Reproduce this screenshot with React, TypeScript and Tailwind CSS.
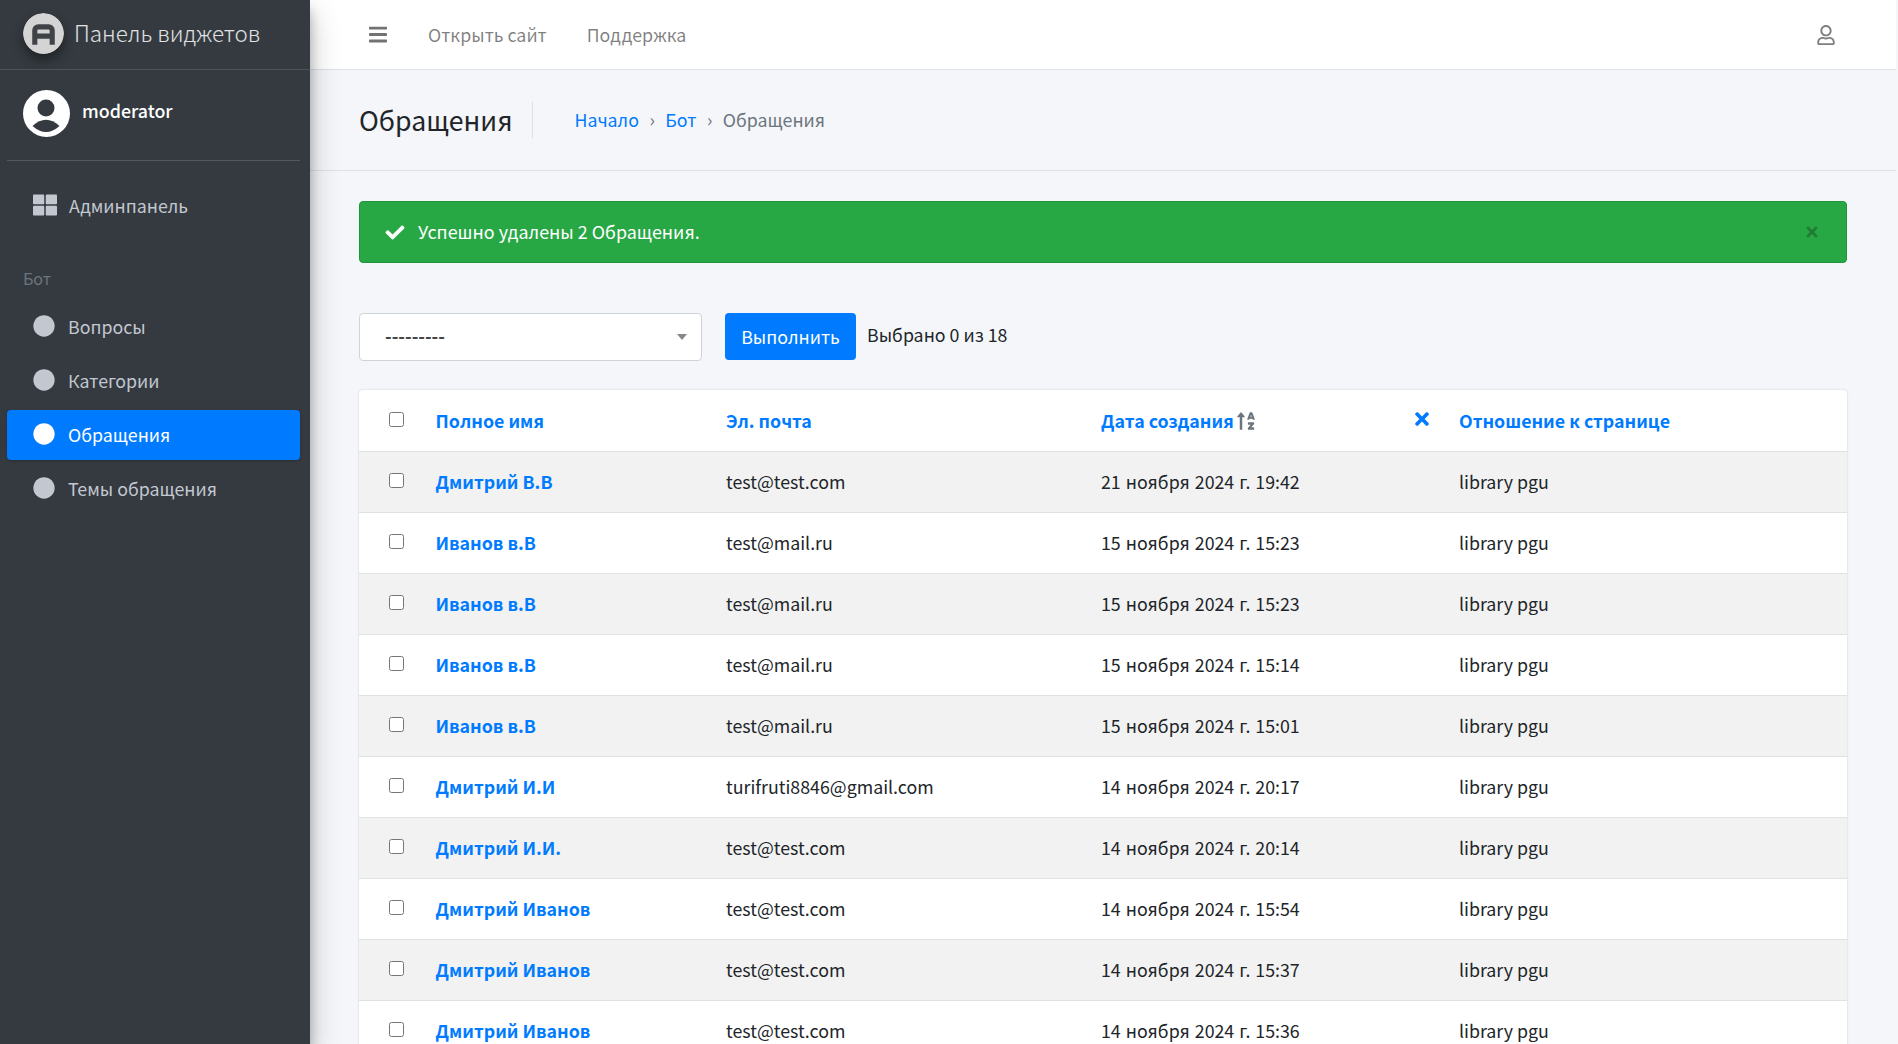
import { FaBars, FaCheck, FaCircle, FaRegUser, FaSortAlphaUp, FaThLarge, FaTimes } from "react-icons/fa";

const rows = [
  { name: "Дмитрий В.В", email: "test@test.com", date: "21 ноября 2024 г. 19:42" },
  { name: "Иванов в.В", email: "test@mail.ru", date: "15 ноября 2024 г. 15:23" },
  { name: "Иванов в.В", email: "test@mail.ru", date: "15 ноября 2024 г. 15:23" },
  { name: "Иванов в.В", email: "test@mail.ru", date: "15 ноября 2024 г. 15:14" },
  { name: "Иванов в.В", email: "test@mail.ru", date: "15 ноября 2024 г. 15:01" },
  { name: "Дмитрий И.И", email: "turifruti8846@gmail.com", date: "14 ноября 2024 г. 20:17" },
  { name: "Дмитрий И.И.", email: "test@test.com", date: "14 ноября 2024 г. 20:14" },
  { name: "Дмитрий Иванов", email: "test@test.com", date: "14 ноября 2024 г. 15:54" },
  { name: "Дмитрий Иванов", email: "test@test.com", date: "14 ноября 2024 г. 15:37" },
  { name: "Дмитрий Иванов", email: "test@test.com", date: "14 ноября 2024 г. 15:36" },
];

const botLinks = ["Вопросы", "Категории", "Обращения", "Темы обращения"];

function Logo() {
  return (
    <svg viewBox="0 0 40 40" className="h-[41px] w-[41px] shrink-0 rounded-full shadow-[0_6px_12px_rgba(0,0,0,0.4)]">
      <circle cx="20" cy="20" r="20" fill="#d4d4d4" />
      <path
        fillRule="evenodd"
        d="M9 31V17a6 6 0 0 1 6-6h10a6 6 0 0 1 6 6v14h-5v-6H14v6zM14 20h12v-3a1 1 0 0 0-1-1H15a1 1 0 0 0-1 1z"
        fill="#3f4348"
      />
    </svg>
  );
}

function Avatar() {
  return (
    <svg viewBox="0 0 47 47" className="h-[47px] w-[47px] shrink-0">
      <circle cx="23.5" cy="23.5" r="23.5" fill="#fff" />
      <circle cx="23" cy="18" r="8.5" fill="#343a40" />
      <path d="M9.5 36Q23 23.5 36.5 36Q23 48 9.5 36z" fill="#343a40" />
    </svg>
  );
}

function Sidebar() {
  return (
    <aside className="z-10 flex w-[310px] shrink-0 flex-col bg-[#343a40] shadow-[0_14px_28px_rgba(0,0,0,0.25),0_10px_10px_rgba(0,0,0,0.22)]">
      <div className="flex h-[70px] items-center gap-[10px] border-b border-[#4b545c] pb-[3px] pl-[23px]">
        <Logo />
        <span className="text-[22.4px] font-light text-white/85">Панель виджетов</span>
      </div>
      <div className="mr-[10px] ml-[7px]">
        <div className="flex h-[91px] items-start gap-[12px] border-b border-[#4f5962] pt-[20px] pl-[16px]">
          <Avatar />
          <span className="mt-[6px] text-[17.8px] leading-[28px] font-medium text-white">moderator</span>
        </div>
        <nav className="mt-[20px] flex flex-col">
          <a className="flex h-[50px] items-center gap-[12px] pb-[2px] pl-[26px] text-[17.8px] text-[#c2c7d0]">
            <FaThLarge className="h-[24px] w-[24px]" />
            <span>Админпанель</span>
          </a>
          <div className="mt-[33px] mb-[9px] pl-[16px] text-[16px] leading-[28px] text-[#6c757d]">Бот</div>
          <div className="flex flex-col gap-[4px]">
            {botLinks.map((link) => {
              const active = link === "Обращения";
              return (
                <a
                  key={link}
                  className={
                    active
                      ? "mt-[1px] -mb-[1px] flex h-[50px] items-center gap-[13px] rounded-[4px] bg-[#007bff] pb-[2px] pl-[26px] text-[17.8px] text-white shadow-[0_1px_3px_rgba(0,0,0,0.2)]"
                      : "flex h-[50px] items-center gap-[13px] pl-[26px] text-[17.8px] text-[#c2c7d0]"
                  }
                >
                  <FaCircle className="h-[22px] w-[22px]" />
                  <span>{link}</span>
                </a>
              );
            })}
          </div>
        </nav>
      </div>
    </aside>
  );
}

function Topbar() {
  return (
    <header className="flex h-[70px] shrink-0 items-center border-b border-[#dee2e6] bg-white pr-[61px] pl-[59px] text-[17.8px] text-black/50">
      <FaBars className="h-[21px] w-[18px] text-black/55" />
      <a className="mb-[1px] ml-[41px]">Открыть сайт</a>
      <a className="mb-[1px] ml-[40px]">Поддержка</a>
      <FaRegUser className="ml-auto h-[20px] w-[18px] text-black/50" />
    </header>
  );
}

function PageHeader() {
  return (
    <div className="flex h-[101px] shrink-0 items-center border-b border-[#dee2e6] pl-[49px]">
      <h1 className="mb-[1px] border-r border-[#dcdee1] pr-[20px] text-[26.7px] leading-[36px] text-[#212529]">Обращения</h1>
      <ol className="mb-[1px] ml-[41px] flex items-center text-[17.8px] text-[#6c757d]">
        <li className="text-[#007bff]">Начало</li>
        <li className="mx-[10.5px]">›</li>
        <li className="text-[#007bff]">Бот</li>
        <li className="mx-[10.5px]">›</li>
        <li>Обращения</li>
      </ol>
    </div>
  );
}

function ResultTable() {
  return (
    <div className="mt-[29px] rounded-t-[4px] bg-white shadow-[0_0_2px_rgba(0,0,0,0.2)]">
      <div className="grid h-[61px] grid-cols-[76.5px_290.5px_375px_358px_1fr] items-center text-[17.8px] font-bold text-[#007bff]">
        <input type="checkbox" className="mb-[3px] ml-[30px] h-[15px] w-[15px]" />
        <span>Полное имя</span>
        <span>Эл. почта</span>
        <span className="relative flex items-center gap-[2px]">
          Дата создания
          <FaSortAlphaUp className="h-[20px] w-[20px] text-[#6c757d]" />
          <FaTimes className="absolute top-[2px] left-[312px] h-[20px] w-[18px]" />
        </span>
        <span>Отношение к странице</span>
      </div>
      {rows.map((row, i) => (
        <div
          key={i}
          className={
            i % 2 === 0
              ? "grid h-[61px] grid-cols-[76.5px_290.5px_375px_358px_1fr] items-center border-t border-[#dee2e6] bg-[#f2f2f2] pb-[1px] text-[17.8px] text-[#212529]"
              : "grid h-[61px] grid-cols-[76.5px_290.5px_375px_358px_1fr] items-center border-t border-[#dee2e6] pb-[1px] text-[17.8px] text-[#212529]"
          }
        >
          <input type="checkbox" className="mb-[2px] ml-[30px] h-[15px] w-[15px]" />
          <a className="font-bold text-[#007bff]">{row.name}</a>
          <span>{row.email}</span>
          <span className="[word-spacing:1px]">{row.date}</span>
          <span>library pgu</span>
        </div>
      ))}
    </div>
  );
}

export default function App() {
  return (
    <div className="flex h-screen overflow-hidden bg-[#f4f6f9] font-['Noto_Sans_CJK_SC','Noto_Sans',sans-serif]">
      <Sidebar />
      <main className="flex min-w-0 flex-1 flex-col pr-[2px]">
        <Topbar />
        <PageHeader />
        <section className="pr-[49px] pl-[49px]">
          <div className="mt-[30px] flex h-[62px] items-center rounded-[4px] border border-[#23923d] bg-[#28a745] pr-[27px] pl-[25px] text-[17.8px] text-white">
            <FaCheck className="h-[19px] w-[20px]" />
            <span className="mb-[1px] ml-[13px] text-[17.9px]">Успешно удалены 2 Обращения.</span>
            <FaTimes className="ml-auto h-[16px] w-[14px] text-black/25" />
          </div>
          <div className="mt-[50px] flex items-start">
            <div className="flex h-[48px] w-[343px] items-center justify-between rounded-[4px] border border-[#ced4da] bg-white pr-[14px] pl-[25px] text-[18px] font-semibold text-[#444]">
              <span className="mb-[3px]">---------</span>
              <span className="h-0 w-0 border-x-[5px] border-t-[6px] border-x-transparent border-t-[#888]" />
            </div>
            <button className="ml-[23px] h-[47px] w-[131px] rounded-[4px] bg-[#007bff] text-[17.8px] text-white">Выполнить</button>
            <span className="ml-[11px] pt-[7px] text-[17.8px] leading-[28px] text-[#212529]">Выбрано 0 из 18</span>
          </div>
          <ResultTable />
        </section>
      </main>
    </div>
  );
}
